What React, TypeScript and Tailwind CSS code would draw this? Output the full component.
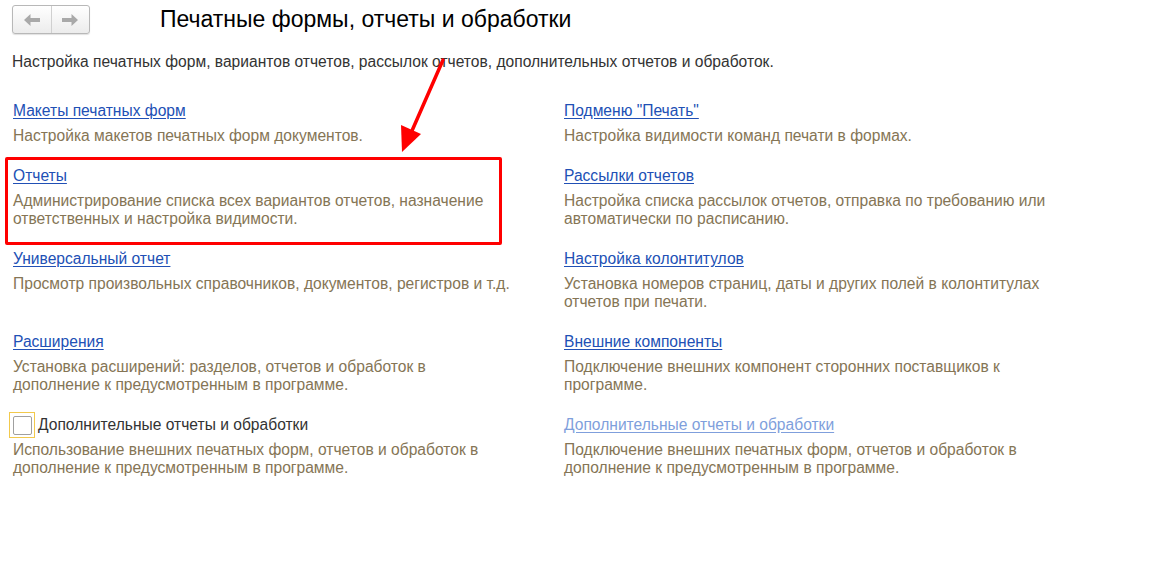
type Item = {
  title: string;
  desc: string;
  kind?: 'link' | 'disabled' | 'checkbox';
};

const rows: [Item, Item][] = [
  [
    { title: 'Макеты печатных форм', desc: 'Настройка макетов печатных форм документов.' },
    { title: 'Подменю "Печать"', desc: 'Настройка видимости команд печати в формах.' },
  ],
  [
    {
      title: 'Отчеты',
      desc: 'Администрирование списка всех вариантов отчетов, назначение ответственных и настройка видимости.',
    },
    {
      title: 'Рассылки отчетов',
      desc: 'Настройка списка рассылок отчетов, отправка по требованию или автоматически по расписанию.',
    },
  ],
  [
    {
      title: 'Универсальный отчет',
      desc: 'Просмотр произвольных справочников, документов, регистров и т.д.',
    },
    {
      title: 'Настройка колонтитулов',
      desc: 'Установка номеров страниц, даты и других полей в колонтитулах отчетов при печати.',
    },
  ],
  [
    {
      title: 'Расширения',
      desc: 'Установка расширений: разделов, отчетов и обработок в дополнение к предусмотренным в программе.',
    },
    {
      title: 'Внешние компоненты',
      desc: 'Подключение внешних компонент сторонних поставщиков к программе.',
    },
  ],
  [
    {
      title: 'Дополнительные отчеты и обработки',
      desc: 'Использование внешних печатных форм, отчетов и обработок в дополнение к предусмотренным в программе.',
      kind: 'checkbox',
    },
    {
      title: 'Дополнительные отчеты и обработки',
      desc: 'Подключение внешних печатных форм, отчетов и обработок в дополнение к предусмотренным в программе.',
      kind: 'disabled',
    },
  ],
];

function NavArrow({ dir }: { dir: 'left' | 'right' }) {
  return (
    <svg width="16" height="12" viewBox="0 0 16 12" className={dir === 'right' ? 'rotate-180' : ''}>
      <polygon points="0,6 6.5,0 6.5,4 16,4 16,8 6.5,8 6.5,12" fill="#a9a9a9" />
    </svg>
  );
}

function Cell({ item }: { item: Item }) {
  return (
    <div className="pb-[22px]">
      {item.kind === 'checkbox' ? (
        <div className="flex items-center h-[18px] -ml-[4px]">
          <span className="w-[26px] h-[26px] border border-[#f2c94c] flex items-center justify-center shrink-0">
            <span className="w-[19px] h-[19px] border border-[#a0a0a0] rounded-[2px] bg-white" />
          </span>
          <span className="ml-[3px] text-[#333333]">{item.title}</span>
        </div>
      ) : (
        <a
          href="#"
          className={
            item.kind === 'disabled'
              ? 'block w-fit leading-[18px] text-[#7f9fdc] underline underline-offset-2'
              : 'block w-fit leading-[18px] text-[#2150b5] underline underline-offset-2'
          }
        >
          {item.title}
        </a>
      )}
      <p className="mt-[7px] leading-[18px] text-[#857555] max-w-[500px]">{item.desc}</p>
    </div>
  );
}

export default function App() {
  return (
    <div
      className="relative w-[1164px] h-[585px] bg-white text-[15.6px] overflow-hidden"
      style={{ fontFamily: '"Liberation Sans", Arial, sans-serif' }}
    >
      {/* Header */}
      <div className="flex items-center pt-[5px] pl-[12px]">
        <div className="flex h-[29px] w-[78px] border border-[#b8b8b8] rounded-[3px] bg-gradient-to-b from-white to-[#ececec] shadow-[0_1px_1px_rgba(0,0,0,0.12)]">
          <button className="flex-1 flex items-center justify-center border-r border-[#d0d0d0]">
            <NavArrow dir="left" />
          </button>
          <button className="flex-1 flex items-center justify-center">
            <NavArrow dir="right" />
          </button>
        </div>
        <h1 className="ml-[70px] text-[23px] text-black leading-[29px]">
          Печатные формы, отчеты и обработки
        </h1>
      </div>

      {/* Subtitle */}
      <p className="mt-[19px] pl-[12px] leading-[18px] text-[#333333]">
        Настройка печатных форм, вариантов отчетов, рассылок отчетов, дополнительных отчетов и обработок.
      </p>

      {/* Sections */}
      <div className="grid grid-cols-[551px_1fr] pl-[13px] mt-[31px]">
        {rows.map(([left, right], i) => (
          <div key={i} className="contents">
            <Cell item={left} />
            <Cell item={right} />
          </div>
        ))}
      </div>

      {/* Annotation: red frame */}
      <div className="absolute left-[5px] top-[157px] w-[497px] h-[88px] border-[3px] border-[#ff0000] rounded-[2px] pointer-events-none" />

      {/* Annotation: arrow */}
      <svg className="absolute left-[395px] top-[55px] pointer-events-none" width="60" height="105" viewBox="0 0 60 105">
        <line x1="48" y1="5" x2="16" y2="78" stroke="#ff0000" strokeWidth="3.5" strokeLinecap="round" />
        <polygon points="7,97 6,70 26,79" fill="#ff0000" />
      </svg>
    </div>
  );
}
